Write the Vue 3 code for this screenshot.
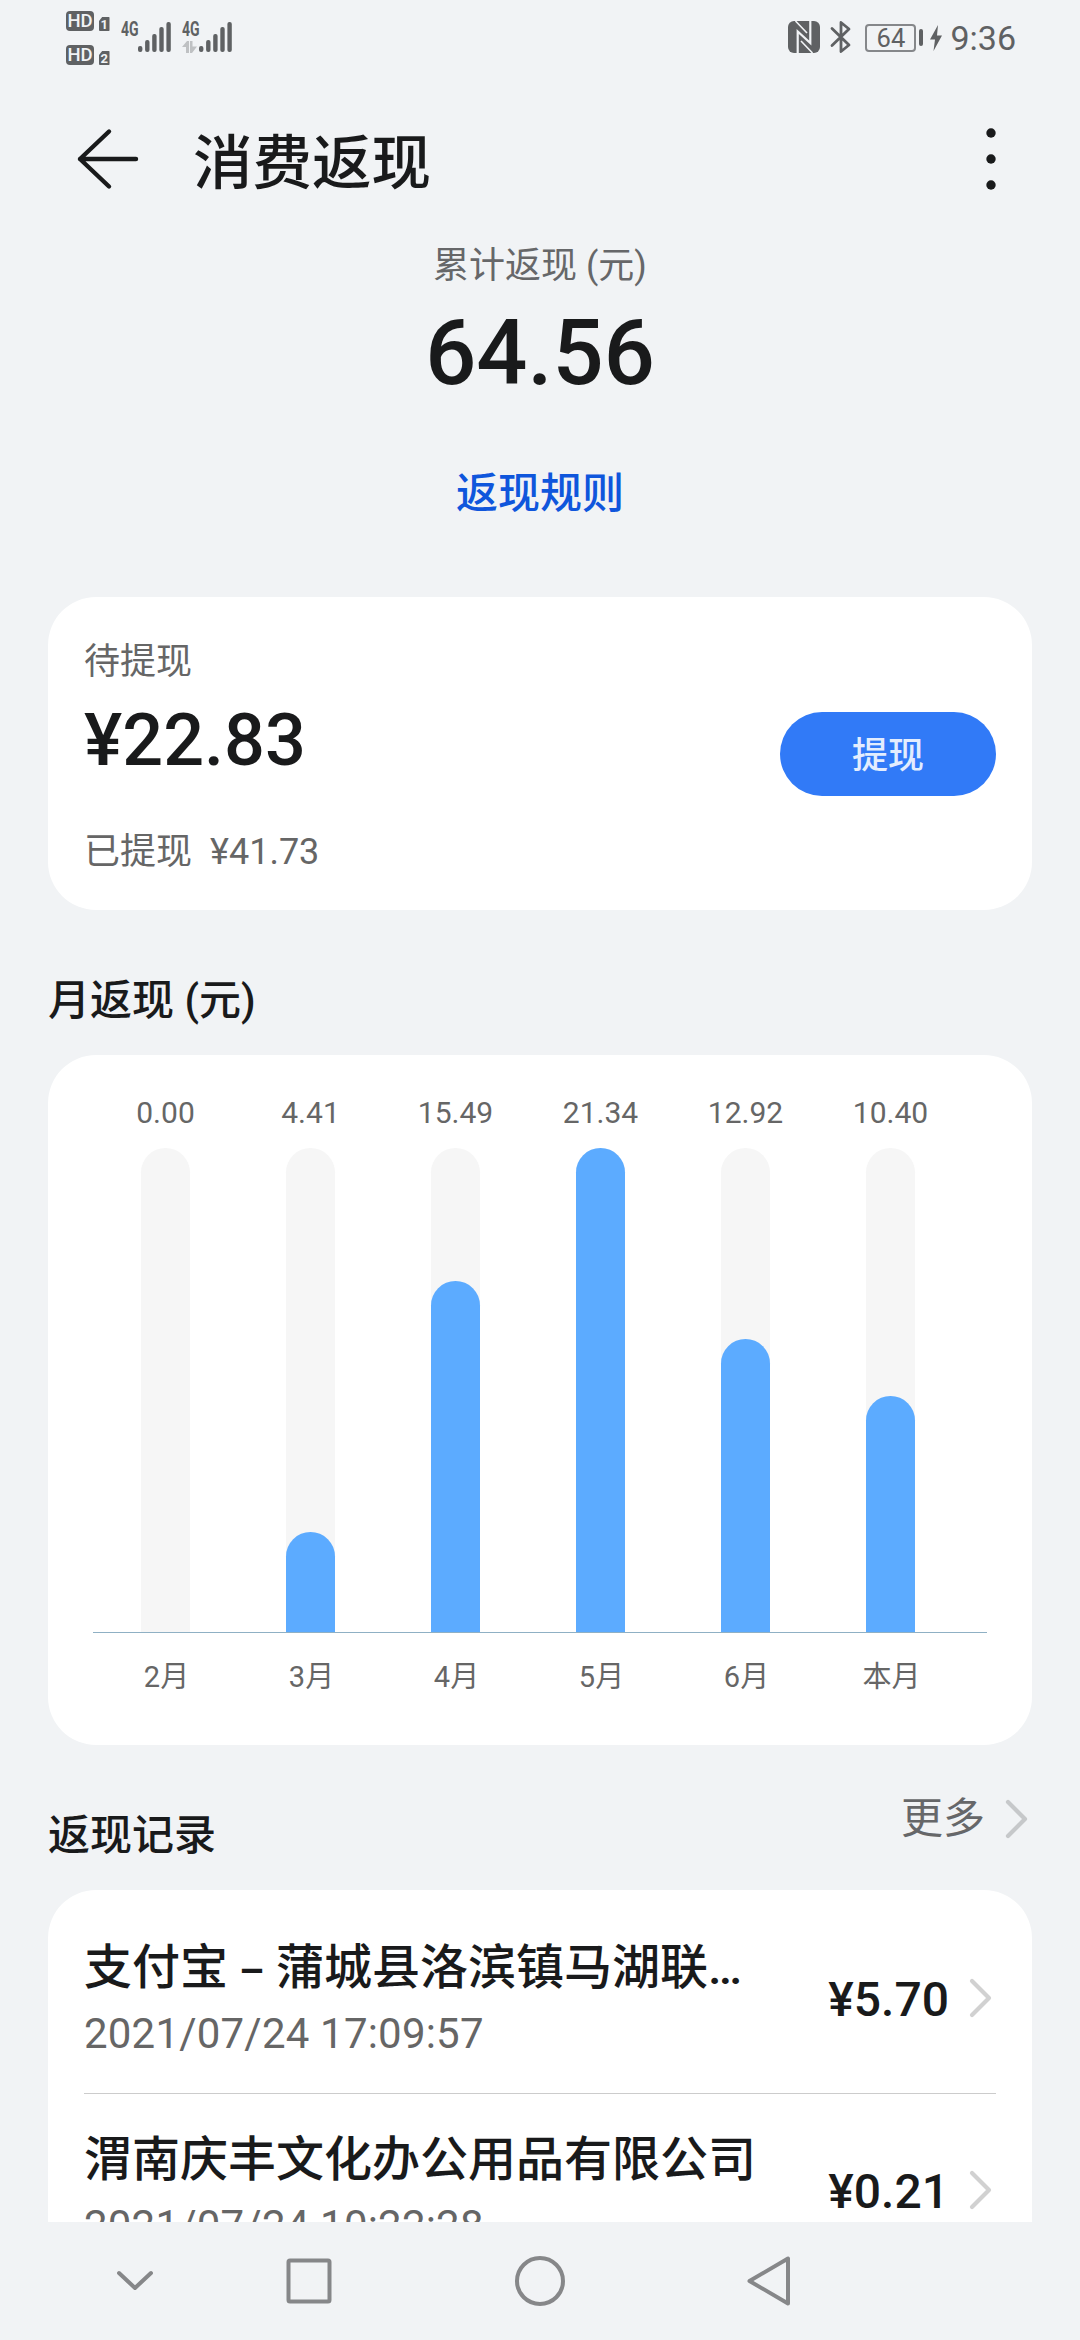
<script setup>
const months = [
  { label: '2月', value: 0 },
  { label: '3月', value: 4.41 },
  { label: '4月', value: 15.49 },
  { label: '5月', value: 21.34 },
  { label: '6月', value: 12.92 },
  { label: '本月', value: 10.4 },
]
const peak = Math.max(...months.map((m) => m.value))

const records = [
  { channel: '支付宝', name: '蒲城县洛滨镇马湖联…', time: '2021/07/24 17:09:57', amount: '¥5.70' },
  { name: '渭南庆丰文化办公用品有限公司', time: '2021/07/24 10:22:28', amount: '¥0.21' },
]

const sims = [
  { id: 1, data: false },
  { id: 2, data: true },
]
const signalBars = [6, 12, 18, 25, 30]
</script>

<template>
  <div class="screen">
    <div class="status">
      <div class="hd-col">
        <div v-for="s in sims" :key="s.id" class="hd-row">
          <span class="hd">HD</span>
          <span class="sim">{{ s.id }}</span>
        </div>
      </div>
      <div v-for="s in sims" :key="s.id" class="signal">
        <div class="net">
          <span class="net-label">4G</span>
          <svg class="net-arrows" width="16" height="12" viewBox="0 0 16 12">
            <path v-if="s.data" d="M0 6 5 0h2v12H4V6zM8 0h2.5v5.5H15L10 12H8z" fill="#bfc1c3" />
          </svg>
        </div>
        <svg class="bars" width="33" height="31" viewBox="0 0 33 31">
          <rect
            v-for="(h, i) in signalBars"
            :key="i"
            :x="i * 7.1"
            :y="31 - h"
            width="4.4"
            :height="h"
            rx="2"
            fill="#5f6163"
          />
        </svg>
      </div>
      <div class="status-right">
        <svg class="nfc" width="32" height="32" viewBox="0 0 32 32">
          <rect width="32" height="32" rx="6" fill="#5f6163" />
          <path d="M9.7 32V10.500L22.300 22V0" fill="none" stroke="#f1f3f5" stroke-width="2.2" />
          <path d="M7.500 0 19 12M13 20 24.500 32" fill="none" stroke="#f1f3f5" stroke-width="1.600" />
        </svg>
        <svg class="bt" width="22" height="34" viewBox="0 0 22 34">
          <path d="M2 8.500 19 25 11 31.500V2.500L19 9 2 25.500" fill="none" stroke="#5f6163" stroke-width="2.8" stroke-linejoin="round" stroke-linecap="round" />
        </svg>
        <div class="battery">64</div>
        <div class="battery-tip"></div>
        <svg class="bolt" width="12" height="26" viewBox="0 0 12 26">
          <path d="M8 0 0 14.500h5L3.500 26 12 10.500H7z" fill="#5f6163" />
        </svg>
        <span class="clock">9:36</span>
      </div>
    </div>

    <header class="header">
      <svg width="64" height="64" viewBox="0 0 64 64">
        <path d="M33 4.500 4 32l29 27.500M4 32h56" fill="none" stroke="#191a1b" stroke-width="4.400" stroke-linecap="round" stroke-linejoin="round" />
      </svg>
      <h1>消费返现</h1>
      <svg class="more-dots" width="12" height="64" viewBox="0 0 12 64">
        <circle v-for="y in [6, 32, 58]" :key="y" cx="6" :cy="y" r="4.700" fill="#191a1b" />
      </svg>
    </header>

    <main class="content">
      <section class="summary">
        <div class="summary-label">累计返现 (元)</div>
        <div class="summary-total">64.56</div>
        <a class="rules">返现规则</a>
      </section>

      <section class="card pending">
        <div>
          <div class="muted">待提现</div>
          <div class="pending-amount">¥22.83</div>
          <div class="muted withdrawn"><span>已提现</span><span>¥41.73</span></div>
        </div>
        <button class="withdraw">提现</button>
      </section>

      <h2 class="chart-title">月返现 (元)</h2>
      <section class="card chart">
        <div class="plot">
          <div v-for="m in months" :key="m.label" class="col">
            <div class="value">{{ m.value.toFixed(2) }}</div>
            <div class="track">
              <div v-if="m.value" class="fill" :style="{ height: (m.value / peak) * 100 + '%' }"></div>
            </div>
          </div>
        </div>
        <div class="labels">
          <div v-for="m in months" :key="m.label" class="col month">{{ m.label }}</div>
        </div>
      </section>

      <div class="records-head">
        <h2>返现记录</h2>
        <a class="more">
          <span>更多</span>
          <svg width="24" height="42" viewBox="0 0 24 42">
            <path d="M4 4 21 21 4 38" fill="none" stroke="#c6c8ca" stroke-width="4.200" stroke-linecap="round" stroke-linejoin="round" />
          </svg>
        </a>
      </div>
      <section class="card records">
        <div v-for="r in records" :key="r.time" class="record">
          <div class="record-main">
            <div class="record-name">
              <template v-if="r.channel">{{ r.channel }}<span class="dash">–</span></template>{{ r.name }}
            </div>
            <div class="record-time">{{ r.time }}</div>
          </div>
          <div class="record-amount">{{ r.amount }}</div>
          <svg width="24" height="42" viewBox="0 0 24 42">
            <path d="M4 4 21 21 4 38" fill="none" stroke="#d1d1d1" stroke-width="4.200" stroke-linecap="round" stroke-linejoin="round" />
          </svg>
        </div>
      </section>
    </main>

    <nav class="nav">
      <svg class="nav-hide" width="40" height="24" viewBox="0 0 40 24">
        <path d="M4 4l16 15L36 4" />
      </svg>
      <svg class="nav-recent" width="50" height="50" viewBox="0 0 50 50">
        <rect x="4.500" y="4.500" width="41" height="41" rx="1.500" />
      </svg>
      <svg class="nav-home" width="54" height="54" viewBox="0 0 54 54">
        <circle cx="27" cy="27" r="23" />
      </svg>
      <svg class="nav-back" width="48" height="54" viewBox="0 0 48 54">
        <path d="M43 4.500v45L4.500 27z" />
      </svg>
    </nav>
  </div>
</template>

<style>
body {
  background: #f1f3f5;
}
</style>

<style scoped>
.screen {
  display: flex;
  flex-direction: column;
  width: 1080px;
  height: 2340px;
  overflow: hidden;
  background: #f1f3f5;
  color: #191a1b;
  font-family: Roboto, "Noto Sans CJK SC", sans-serif;
}
h1,
h2 {
  margin: 0;
  font-weight: 500;
}
svg {
  display: block;
  flex: none;
}

.status {
  display: flex;
  align-items: flex-start;
  height: 119px;
  box-sizing: border-box;
  padding: 11px 64px 0 66px;
  color: #5f6163;
}
.hd-col {
  display: flex;
  flex-direction: column;
  gap: 14px;
  width: 55px;
}
.hd-row {
  display: flex;
  align-items: flex-end;
  gap: 5px;
  height: 20px;
}
.hd {
  width: 28px;
  height: 20px;
  border-radius: 4px;
  background: #5f6163;
  color: #f1f3f5;
  font-size: 18.500px;
  line-height: 20px;
  font-weight: 500;
  text-align: center;
}
.sim {
  width: 10.500px;
  height: 14px;
  background: #5f6163;
  color: #f1f3f5;
  font-size: 13px;
  line-height: 15px;
  font-weight: 700;
  text-align: center;
  border-radius: 1px;
  clip-path: polygon(30% 0, 100% 0, 100% 100%, 0 100%, 0 28%);
}
.signal {
  display: flex;
  width: 61px;
  padding-top: 10px;
}
.net {
  width: 17px;
}
.net-label {
  display: block;
  width: 24px;
  height: 20px;
  font-size: 19.500px;
  line-height: 17px;
  font-weight: 700;
  transform: scaleX(0.72);
  transform-origin: 0 0;
}
.status-right {
  display: flex;
  align-items: flex-start;
  margin-left: auto;
}
.nfc {
  margin-top: 10px;
}
.bt {
  margin: 9px 0 0 10px;
}
.battery {
  width: 51px;
  height: 28px;
  box-sizing: border-box;
  margin: 13px 0 0 13px;
  border: 2px solid #85878a;
  border-radius: 4px;
  font-size: 25.500px;
  line-height: 25px;
  text-align: center;
}
.battery-tip {
  width: 4px;
  height: 17px;
  margin: 18px 0 0 3px;
  border-radius: 2px;
  background: #5f6163;
}
.bolt {
  margin: 14px 0 0 7px;
}
.clock {
  margin: 7px 0 0 8px;
  font-size: 34px;
  line-height: 40px;
}

.header {
  display: flex;
  align-items: center;
  height: 80px;
  padding: 0 83px 0 76px;
}
.header h1 {
  margin: 10px 0 0 53px;
  font-size: 59.500px;
  line-height: 80px;
}
.more-dots {
  margin-left: auto;
}

.content {
  flex: none;
  height: 2023px;
  overflow: hidden;
  padding: 0 48px;
}
.summary {
  display: flex;
  flex-direction: column;
  align-items: center;
  height: 398px;
  box-sizing: border-box;
  padding-top: 43px;
}
.summary-label {
  color: #666769;
  font-size: 36px;
  line-height: 48px;
}
.summary-total {
  margin-top: 19px;
  font-size: 90px;
  line-height: 90px;
  font-weight: 500;
}
.rules {
  margin-top: 67px;
  color: #0f56dc;
  font-size: 42px;
  line-height: 56px;
  font-weight: 500;
}
.card {
  box-sizing: border-box;
  border-radius: 48px;
  background: #fff;
}
.pending {
  display: flex;
  justify-content: space-between;
  align-items: flex-start;
  height: 313px;
  padding: 41px 36px 0;
}
.muted {
  color: #666;
  font-size: 36px;
  line-height: 48px;
}
.pending-amount {
  margin: 15px 0 47px;
  font-size: 72px;
  line-height: 80px;
  font-weight: 500;
}
.withdrawn {
  display: flex;
  gap: 18px;
}
.withdraw {
  width: 216px;
  height: 84px;
  margin-top: 74px;
  padding: 4px 0 0;
  border: 0;
  border-radius: 42px;
  background: #317af7;
  color: #e3edfe;
  font-family: inherit;
  font-size: 36px;
  line-height: 80px;
  font-weight: 500;
}
h2 {
  font-size: 42px;
  line-height: 56px;
}
.chart-title {
  margin-top: 63px;
}
.chart {
  height: 690px;
  margin-top: 26px;
  padding: 38px 45px 0;
}
.plot,
.labels {
  display: flex;
}
.plot {
  border-bottom: 1px solid #8fb0c4;
}
.col {
  display: flex;
  flex-direction: column;
  align-items: center;
  flex: none;
  width: 145px;
}
.value {
  color: #666;
  font-size: 30px;
  line-height: 40px;
}
.track {
  display: flex;
  align-items: flex-end;
  width: 49px;
  height: 484px;
  margin-top: 15px;
  border-radius: 24.500px 24.500px 0 0;
  background: #f6f6f6;
}
.fill {
  width: 100%;
  border-radius: 24.500px 24.500px 0 0;
  background: #5cabff;
}
.labels {
  padding-left: 1px;
}
.month {
  margin-top: 24px;
  color: #666;
  font-size: 29px;
  line-height: 40px;
}
.records-head {
  display: flex;
  justify-content: space-between;
  align-items: flex-start;
  height: 145px;
  box-sizing: border-box;
  padding: 46px 4px 0 0;
}
.records-head h2 {
  margin-top: 17px;
}
.more {
  display: flex;
  align-items: center;
  gap: 19px;
  color: #666769;
  font-size: 42px;
  line-height: 56px;
}
.records {
  padding: 12px 36px 0;
}
.record {
  display: flex;
  align-items: center;
  height: 192px;
  box-sizing: border-box;
  border-bottom: 1px solid #ccc;
  padding-right: 4px;
}
.record-main {
  flex: 1;
}
.record-name {
  font-size: 48px;
  line-height: 64px;
  font-weight: 500;
  white-space: nowrap;
}
.dash {
  margin: 0 12px;
  font-family: "Noto Sans", sans-serif;
  line-height: 1;
}
.record-time {
  margin-top: 9px;
  color: #666;
  font-size: 42px;
  line-height: 50px;
  letter-spacing: 0.2px;
}
.record-amount {
  margin: 4px 19px 0 0;
  font-size: 48px;
  line-height: 64px;
  font-weight: 500;
}

.nav {
  display: flex;
  align-items: center;
  flex: 1;
}
.nav svg {
  fill: none;
  stroke: #868789;
  stroke-width: 4;
  stroke-linejoin: round;
  stroke-linecap: round;
}
.nav-hide {
  margin-left: 115px;
}
.nav-recent {
  margin-left: 129px;
}
.nav-home {
  margin-left: 179px;
}
.nav-back {
  margin-left: 178px;
}
</style>
